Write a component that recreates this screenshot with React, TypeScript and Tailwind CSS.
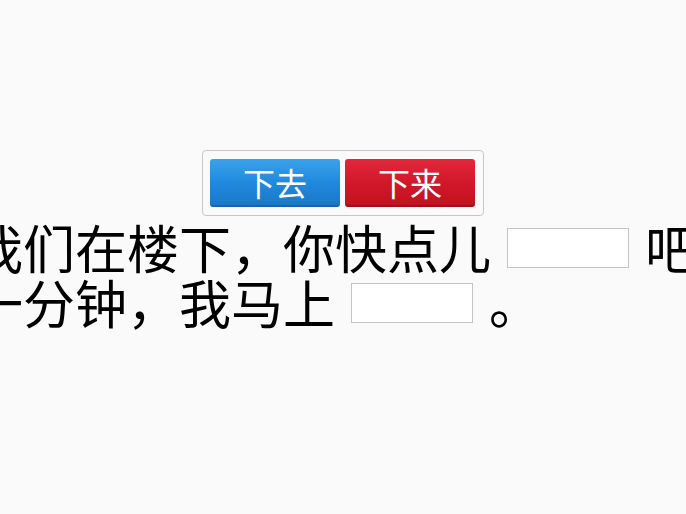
import React from 'react';

const cjk = { fontFamily: '"Noto Sans CJK SC", "Noto Sans", sans-serif' };

function Blank({ width = 'w-[122px]' }: { width?: string }) {
  return (
    <input
      type="text"
      className={`${width} h-[40px] mx-[16px] align-middle -translate-y-[7px] bg-white border border-[#c4c4c4] outline-none`}
    />
  );
}

export default function App() {
  return (
    <div className="w-full h-[514px] bg-[#fafafa] overflow-hidden flex flex-col items-center pt-[150px]" style={cjk}>
      <div className="flex gap-[5px] pl-[7px] pr-[8px] py-[8px] border border-[#c8c8c8] rounded-[4px] bg-[#fafafa]">
        <button className="w-[130px] h-[48px] rounded-[3px] text-white text-[32px] leading-none bg-gradient-to-b from-[#3aa2ea] via-[#208ade] to-[#1b78c8] border-b-2 border-[#1665ad]">
          下去
        </button>
        <button className="w-[130px] h-[48px] rounded-[3px] text-white text-[32px] leading-none bg-gradient-to-b from-[#e2283a] via-[#d2182b] to-[#c2121f] border-b-2 border-[#a50d1a]">
          下来
        </button>
      </div>
      <div className="w-[744px] shrink-0 mt-[4px] text-[52px] leading-[54px] text-black whitespace-nowrap">
        <div>
          我们在楼下，你快点儿<Blank />吧
        </div>
        <div>
          一分钟，我马上<Blank />。
        </div>
      </div>
    </div>
  );
}
